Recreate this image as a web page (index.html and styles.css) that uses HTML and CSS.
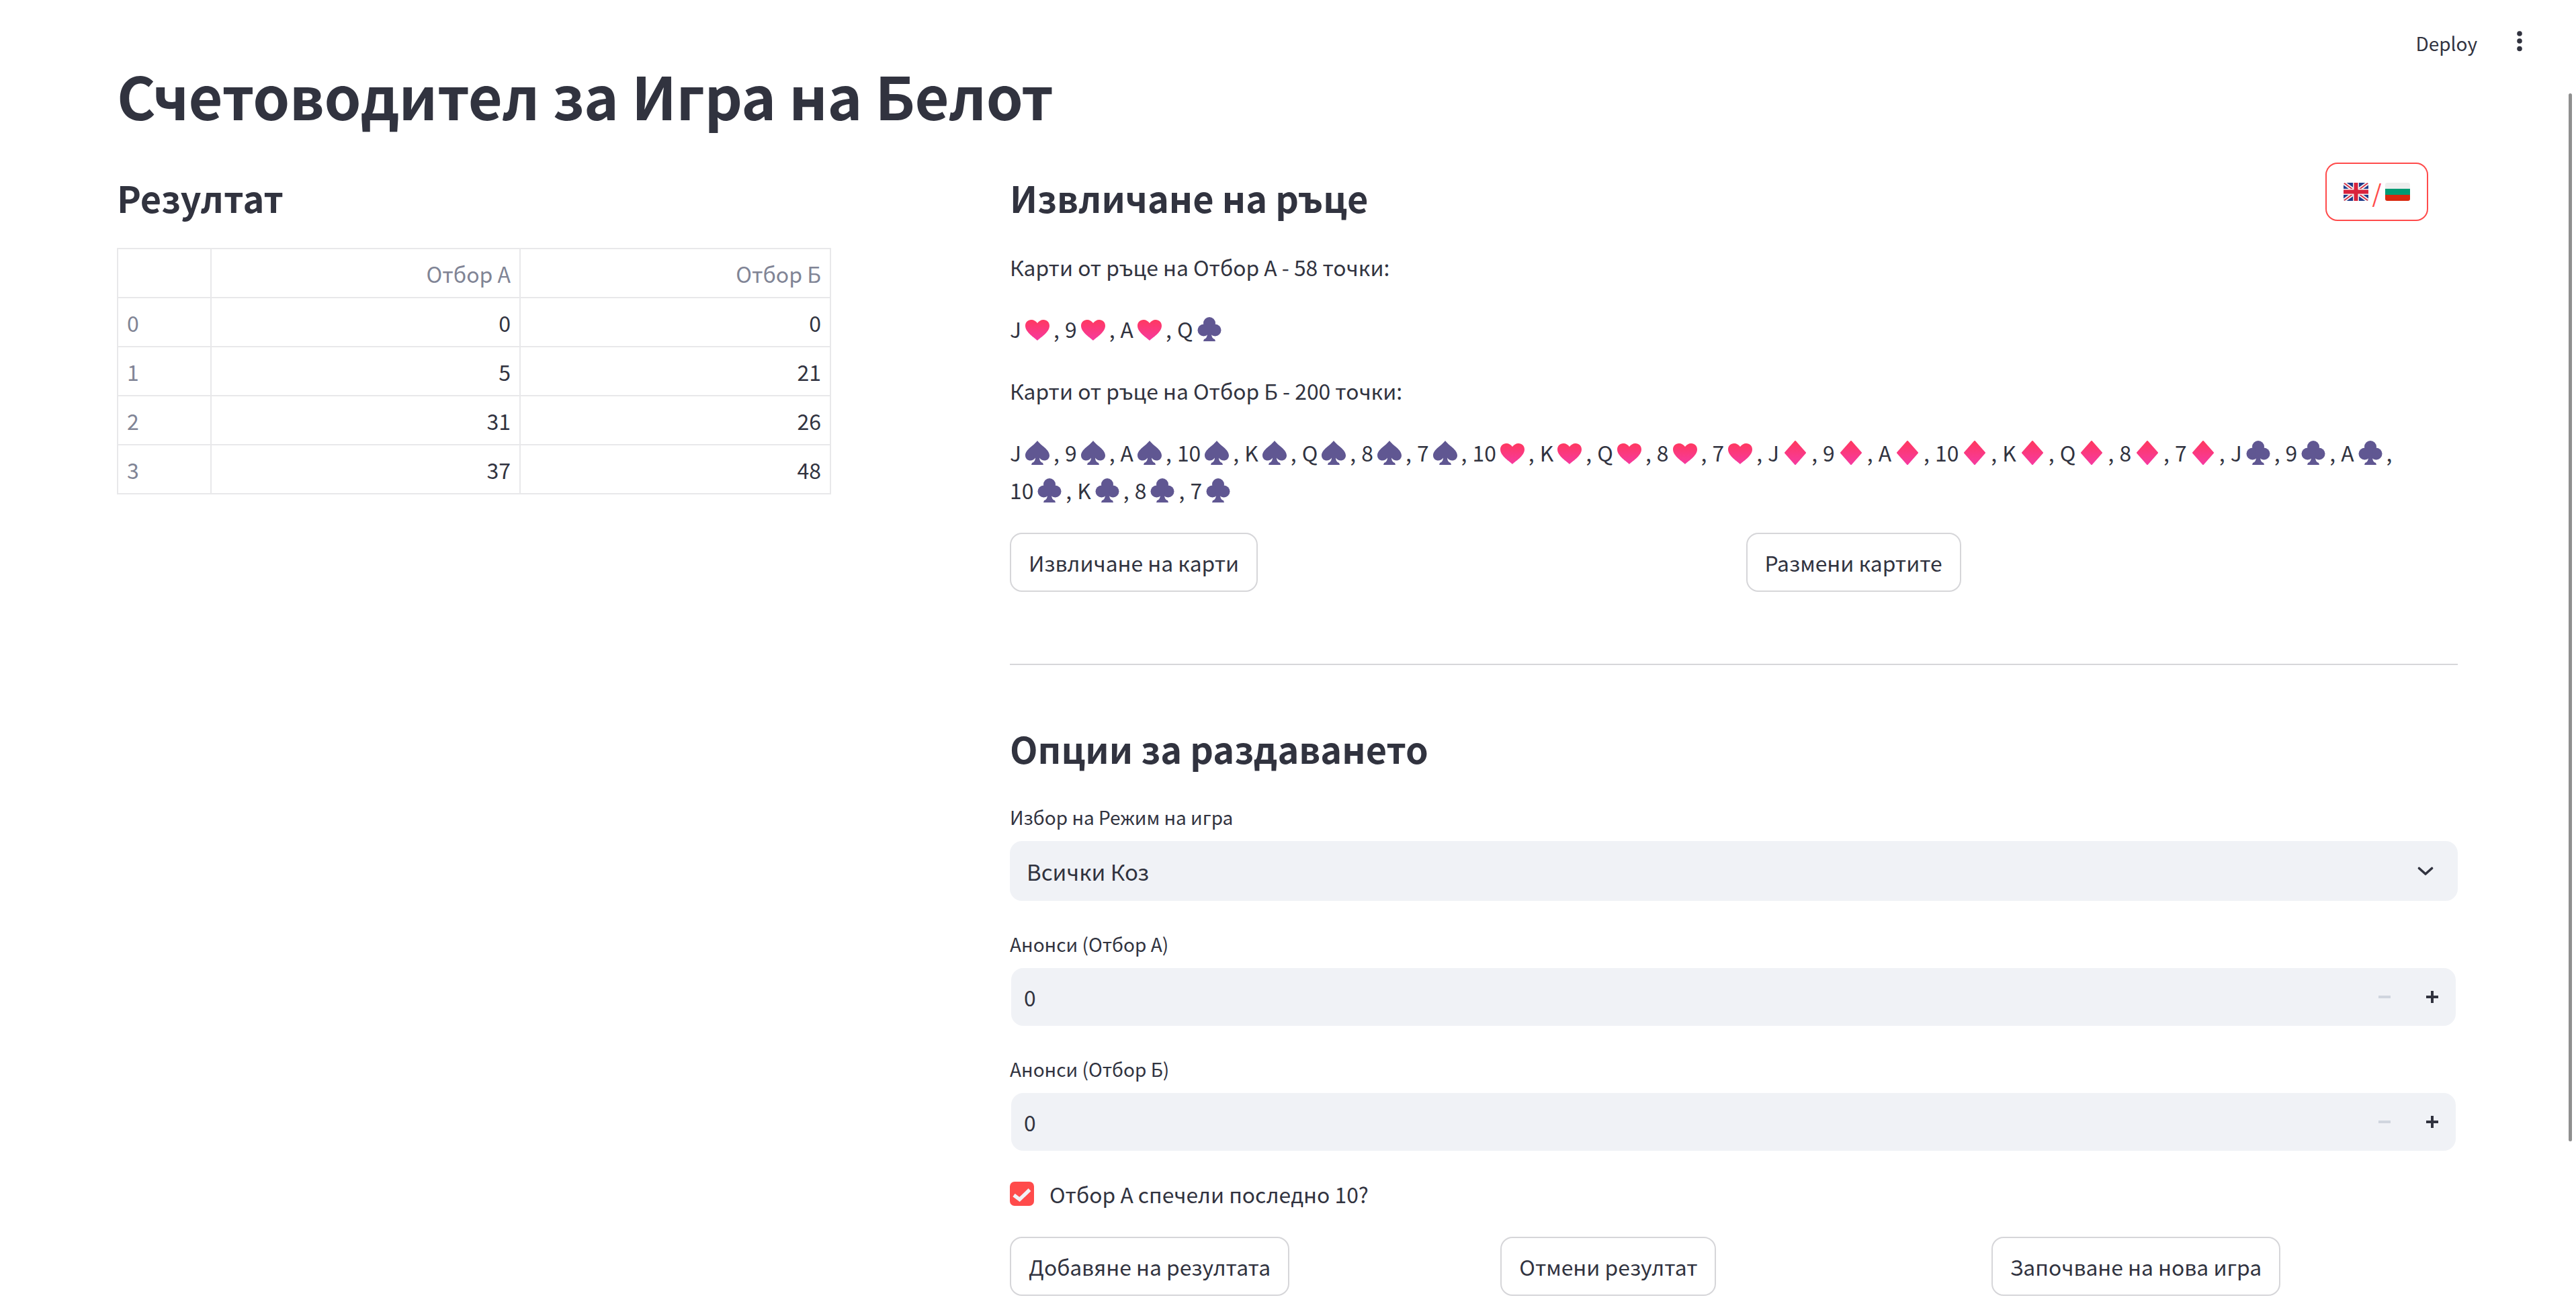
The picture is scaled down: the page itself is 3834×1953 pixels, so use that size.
FILE: index.html
```html
<!DOCTYPE html>
<html lang="bg">
<head>
    <meta charset="UTF-8">
    <title>Счетоводител за Игра на Белот</title>
    <link rel="stylesheet" href="styles.css">
</head>
<body>
    <!-- Suit shapes, reused below -->
    <svg class="defs" aria-hidden="true">
        <defs>
            <linearGradient id="redGrad" x1="0" y1="0" x2="0" y2="1">
                <stop offset="0" stop-color="#ff3860"/>
                <stop offset="1" stop-color="#f63aa0"/>
            </linearGradient>
            <symbol id="heart" viewBox="0 0 48 36">
                <path fill="url(#redGrad)" d="M24 35C21 31.5 6 23 6 13C6 7.5 10 4 15 4C18.5 4 22 6 24 9C26 6 29.5 4 33 4C38 4 42 7.5 42 13C42 23 27 31.5 24 35Z"/>
            </symbol>
            <symbol id="diamond" viewBox="0 0 48 36">
                <path fill="url(#redGrad)" stroke="url(#redGrad)" stroke-width="2" stroke-linejoin="round" d="M24 1L39 18L24 35L9 18Z"/>
            </symbol>
            <symbol id="spade" viewBox="0 0 48 36">
                <path fill="#605792" d="M24 0C29 7 42 13 42 22C42 27 38 29.5 34.5 29.5C31.5 29.5 29 28 27 25.5C27.3 29 28.5 32 32 33L33 36L15 36L16 33C19.5 32 20.7 29 21 25.5C19 28 16.5 29.5 13.5 29.5C10 29.5 6 27 6 22C6 13 19 7 24 0Z"/>
            </symbol>
            <symbol id="club" viewBox="0 0 48 36">
                <g fill="#605792">
                    <circle cx="24" cy="9" r="9"/>
                    <circle cx="15.5" cy="19.5" r="9"/>
                    <circle cx="32.5" cy="19.5" r="9"/>
                    <path d="M20 12H28L27 25C27.3 29 28.5 32 32 33L33 36H15L16 33C19.5 32 20.7 29 21 25Z"/>
                </g>
            </symbol>
        </defs>
    </svg>

    <div class="scrollbar-thumb"></div>

    <div class="toolbar">
        <span class="deploy">Deploy</span>
        <svg class="menu-dots" viewBox="0 0 10 32"><circle cx="5" cy="5" r="3.8"/><circle cx="5" cy="16" r="3.8"/><circle cx="5" cy="27.5" r="3.8"/></svg>
    </div>

    <main class="page">
        <h1>Счетоводител за Игра на Белот</h1>

        <div class="columns">
            <section class="col-left">
                <h2>Резултат</h2>
                <table class="score-table">
                    <tr><th></th><th>Отбор А</th><th>Отбор Б</th></tr>
                    <tr><th>0</th><td>0</td><td>0</td></tr>
                    <tr><th>1</th><td>5</td><td>21</td></tr>
                    <tr><th>2</th><td>31</td><td>26</td></tr>
                    <tr><th>3</th><td>37</td><td>48</td></tr>
                </table>
            </section>

            <section class="col-right">
                <div class="heading-row">
                    <h2>Извличане на ръце</h2>
                    <button class="btn btn-lang">
                        <svg class="flag" viewBox="0 0 37 27">
                            <clipPath id="flagClip"><rect width="37" height="27" rx="3"/></clipPath>
                            <g clip-path="url(#flagClip)">
                                <rect width="37" height="27" fill="#1f3a8a"/>
                                <path d="M0 0L37 27M37 0L0 27" stroke="#f2f2f2" stroke-width="5.5"/>
                                <path d="M0 0L37 27M37 0L0 27" stroke="#d9233c" stroke-width="1.8"/>
                                <path d="M18.5 0V27M0 13.5H37" stroke="#f2f2f2" stroke-width="9"/>
                                <path d="M18.5 0V27M0 13.5H37" stroke="#d9233c" stroke-width="6"/>
                            </g>
                        </svg>
                        <span class="slash">/</span>
                        <svg class="flag" viewBox="0 0 37 27">
                            <g clip-path="url(#flagClip)">
                                <rect width="37" height="9" fill="#eeeeee"/>
                                <rect y="9" width="37" height="9" fill="#009b74"/>
                                <rect y="18" width="37" height="9" fill="#d9280f"/>
                            </g>
                        </svg>
                    </button>
                </div>

                <p class="hand-title">Карти от ръце на Отбор А - 58 точки:</p>
                <p class="hand">
                    <span class="card">J<svg class="suit"><use href="#heart"/></svg>,</span>
                    <span class="card">9<svg class="suit"><use href="#heart"/></svg>,</span>
                    <span class="card">A<svg class="suit"><use href="#heart"/></svg>,</span>
                    <span class="card">Q<svg class="suit"><use href="#club"/></svg></span>
                </p>
                <p class="hand-title">Карти от ръце на Отбор Б - 200 точки:</p>
                <p class="hand">
                    <span class="card">J<svg class="suit"><use href="#spade"/></svg>,</span>
                    <span class="card">9<svg class="suit"><use href="#spade"/></svg>,</span>
                    <span class="card">A<svg class="suit"><use href="#spade"/></svg>,</span>
                    <span class="card">10<svg class="suit"><use href="#spade"/></svg>,</span>
                    <span class="card">K<svg class="suit"><use href="#spade"/></svg>,</span>
                    <span class="card">Q<svg class="suit"><use href="#spade"/></svg>,</span>
                    <span class="card">8<svg class="suit"><use href="#spade"/></svg>,</span>
                    <span class="card">7<svg class="suit"><use href="#spade"/></svg>,</span>
                    <span class="card">10<svg class="suit"><use href="#heart"/></svg>,</span>
                    <span class="card">K<svg class="suit"><use href="#heart"/></svg>,</span>
                    <span class="card">Q<svg class="suit"><use href="#heart"/></svg>,</span>
                    <span class="card">8<svg class="suit"><use href="#heart"/></svg>,</span>
                    <span class="card">7<svg class="suit"><use href="#heart"/></svg>,</span>
                    <span class="card">J<svg class="suit"><use href="#diamond"/></svg>,</span>
                    <span class="card">9<svg class="suit"><use href="#diamond"/></svg>,</span>
                    <span class="card">A<svg class="suit"><use href="#diamond"/></svg>,</span>
                    <span class="card">10<svg class="suit"><use href="#diamond"/></svg>,</span>
                    <span class="card">K<svg class="suit"><use href="#diamond"/></svg>,</span>
                    <span class="card">Q<svg class="suit"><use href="#diamond"/></svg>,</span>
                    <span class="card">8<svg class="suit"><use href="#diamond"/></svg>,</span>
                    <span class="card">7<svg class="suit"><use href="#diamond"/></svg>,</span>
                    <span class="card">J<svg class="suit"><use href="#club"/></svg>,</span>
                    <span class="card">9<svg class="suit"><use href="#club"/></svg>,</span>
                    <span class="card">A<svg class="suit"><use href="#club"/></svg>,</span>
                    <span class="card">10<svg class="suit"><use href="#club"/></svg>,</span>
                    <span class="card">K<svg class="suit"><use href="#club"/></svg>,</span>
                    <span class="card">8<svg class="suit"><use href="#club"/></svg>,</span>
                    <span class="card">7<svg class="suit"><use href="#club"/></svg></span>
                </p>

                <div class="btn-row two">
                    <div><button class="btn">Извличане на карти</button></div>
                    <div><button class="btn">Размени картите</button></div>
                </div>

                <hr>

                <h2 class="options-title">Опции за раздаването</h2>

                <label class="field-label">Избор на Режим на игра</label>
                <div class="select-box">
                    <span>Всички Коз</span>
                    <svg class="chevron" viewBox="0 0 24 14"><path d="M2.5 2.5L12 11L21.5 2.5" fill="none" stroke="#31333f" stroke-width="3.6" stroke-linecap="round" stroke-linejoin="round"/></svg>
                </div>

                <label class="field-label second">Анонси (Отбор А)</label>
                <div class="number-box">
                    <span class="number-value">0</span>
                    <span class="step minus"></span>
                    <svg class="step-plus" viewBox="0 0 18 18"><path d="M9 0V18M0 9H18" stroke="#31333f" stroke-width="4"/></svg>
                </div>

                <label class="field-label second">Анонси (Отбор Б)</label>
                <div class="number-box">
                    <span class="number-value">0</span>
                    <span class="step minus"></span>
                    <svg class="step-plus" viewBox="0 0 18 18"><path d="M9 0V18M0 9H18" stroke="#31333f" stroke-width="4"/></svg>
                </div>

                <div class="check-row">
                    <span class="check-box">
                        <svg viewBox="0 0 36 36"><path d="M6 20L14.5 26.5L29.5 12" fill="none" stroke="#f0f2f6" stroke-width="5.5"/></svg>
                    </span>
                    <span>Отбор А спечели последно 10?</span>
                </div>

                <div class="btn-row three">
                    <div><button class="btn">Добавяне на резултата</button></div>
                    <div><button class="btn">Отмени резултат</button></div>
                    <div><button class="btn">Започване на нова игра</button></div>
                </div>
            </section>
        </div>
    </main>
</body>
</html>
```

FILE: styles.css
```css
* {
    margin: 0;
    padding: 0;
    box-sizing: border-box;
}
html, body {
    height: 100%;
    overflow: hidden;
}
body {
    font-family: "Noto Sans CJK SC", "Noto Sans", sans-serif;
    font-size: 31.8px;
    line-height: 56px;
    color: #31333f;
    background-color: #ffffff;
}
.defs {
    position: absolute;
    width: 0;
    height: 0;
}
.scrollbar-thumb {
    position: absolute;
    top: 139px;
    right: 6px;
    width: 5px;
    height: 1560px;
    background-color: #8f8f8f;
    border-radius: 3px;
}
.toolbar {
    display: flex;
    justify-content: flex-end;
    align-items: center;
    height: 91px;
    padding: 0 79px 0 0;
}
.deploy {
    font-size: 28px;
    margin-right: 58px;
    position: relative;
    top: 18px;
}
.menu-dots {
    width: 10px;
    height: 32px;
    fill: #31333f;
    position: relative;
    top: 15px;
}
.page {
    padding: 0 176px 0 174px;
}
h1 {
    font-size: 88px;
    line-height: 100px;
    font-weight: 700;
    letter-spacing: -0.5px;
    margin-bottom: 51px;
}
h2 {
    font-size: 54px;
    line-height: 80px;
    font-weight: 700;
}
.columns {
    display: grid;
    grid-template-columns: 1293px 2155px;
    column-gap: 36px;
}
.col-left h2 {
    padding-top: 12px;
    margin-bottom: 35px;
}
.score-table {
    width: 1063px;
    table-layout: fixed;
    border-collapse: collapse;
    font-size: 32px;
    line-height: 40px;
}
.score-table th, .score-table td {
    height: 73px;
    border: 2px solid #e8e8ea;
    padding: 0 13px;
    text-align: right;
    font-weight: 400;
}
.score-table th {
    color: #808495;
}
.score-table tr th:first-child {
    width: 139px;
    text-align: left;
}
.score-table tr:first-child th:nth-child(2) {
    width: 460px;
}
.heading-row {
    display: flex;
    justify-content: space-between;
    align-items: flex-start;
    padding-right: 44px;
    height: 87px;
    margin-bottom: 40px;
}
.heading-row h2 {
    padding-top: 12px;
}
.hand-title, .hand {
    margin-bottom: 36px;
}
.card {
    white-space: nowrap;
    margin-right: 1px;
}
.suit {
    width: 48px;
    height: 36px;
    vertical-align: -5px;
}
.btn {
    font-family: inherit;
    font-size: 31.8px;
    line-height: 50px;
    height: 88px;
    padding: 0 26px;
    color: #31333f;
    background-color: #ffffff;
    border: 2px solid #d6d6d9;
    border-radius: 18px;
}
.btn-lang {
    display: flex;
    justify-content: center;
    align-items: center;
    flex-shrink: 0;
    width: 153px;
    height: 87px;
    padding: 0;
    border-color: #ff4b4b;
    color: #ff4b4b;
}
.flag {
    flex-shrink: 0;
    width: 37px;
    height: 27px;
}
.slash {
    width: 25px;
    text-align: center;
    font-size: 36px;
}
.btn-row {
    display: grid;
    column-gap: 36px;
}
.btn-row.two {
    grid-template-columns: 1fr 1fr;
    margin-top: 1px;
}
.btn-row.three {
    grid-template-columns: 1fr 1fr 1fr;
}
hr {
    border: none;
    border-top: 2px solid #d6d6d9;
    margin: 107px 0 84px;
}
.options-title {
    margin-bottom: 42px;
}
.field-label {
    display: block;
    font-size: 28px;
    line-height: 40px;
    margin-bottom: 16px;
}
.field-label.second {
    margin-top: 44px;
}
.select-box {
    display: flex;
    justify-content: space-between;
    align-items: center;
    height: 89px;
    padding: 0 36px 0 25px;
    font-size: 33px;
    background-color: #f0f2f6;
    border-radius: 18px;
}
.chevron {
    width: 24px;
    height: 14px;
}
.number-box {
    display: flex;
    align-items: center;
    height: 86px;
    margin: 0 3px 0 2px;
    padding: 0 26px 0 19px;
    background-color: #f0f2f6;
    border-radius: 18px;
}
.number-value {
    flex: 1;
}
.minus {
    width: 18px;
    height: 4px;
    background-color: #d0d5de;
    margin-right: 53px;
}
.step-plus {
    width: 18px;
    height: 18px;
}
.check-row {
    display: flex;
    align-items: center;
    gap: 23px;
    height: 40px;
    margin: 44px 0;
}
.check-box {
    width: 36px;
    height: 36px;
    background-color: #ff4b4b;
    border-radius: 7px;
}
.check-box svg {
    display: block;
}
```
